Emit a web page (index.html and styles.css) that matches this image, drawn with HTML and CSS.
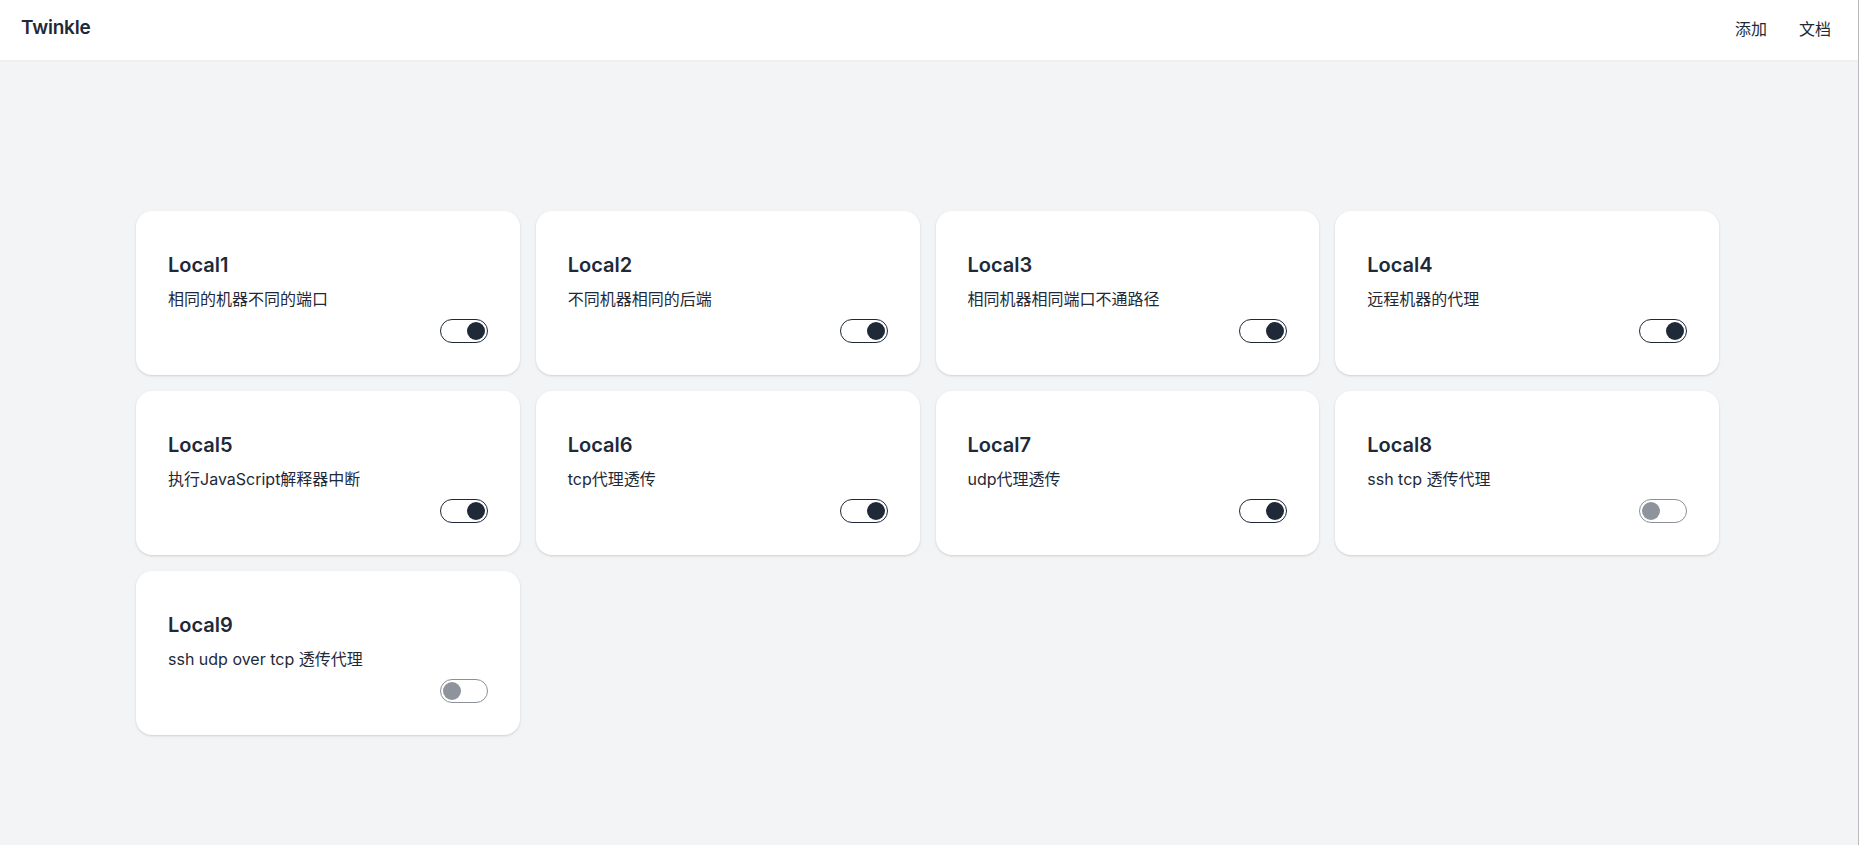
FILE: index.html
```html
<!DOCTYPE html>
<html lang="zh-CN">
<head>
<meta charset="utf-8">
<title>Twinkle</title>
<link rel="stylesheet" href="styles.css">
</head>
<body>
<div class="app">
  <header class="navbar">
    <div class="brand">Twinkle</div>
    <nav class="nav">
      <a class="nav-link">添加</a>
      <a class="nav-link">文档</a>
    </nav>
  </header>
  <main class="main">
    <div class="grid">
      <div class="card"><h2 class="card-title">Local1</h2><p class="card-desc">相同的机器不同的端口</p><div class="card-actions"><span class="toggle on"><span class="knob"></span></span></div></div>
      <div class="card"><h2 class="card-title">Local2</h2><p class="card-desc">不同机器相同的后端</p><div class="card-actions"><span class="toggle on"><span class="knob"></span></span></div></div>
      <div class="card"><h2 class="card-title">Local3</h2><p class="card-desc">相同机器相同端口不通路径</p><div class="card-actions"><span class="toggle on"><span class="knob"></span></span></div></div>
      <div class="card"><h2 class="card-title">Local4</h2><p class="card-desc">远程机器的代理</p><div class="card-actions"><span class="toggle on"><span class="knob"></span></span></div></div>
      <div class="card"><h2 class="card-title">Local5</h2><p class="card-desc">执行JavaScript解释器中断</p><div class="card-actions"><span class="toggle on"><span class="knob"></span></span></div></div>
      <div class="card"><h2 class="card-title">Local6</h2><p class="card-desc">tcp代理透传</p><div class="card-actions"><span class="toggle on"><span class="knob"></span></span></div></div>
      <div class="card"><h2 class="card-title">Local7</h2><p class="card-desc">udp代理透传</p><div class="card-actions"><span class="toggle on"><span class="knob"></span></span></div></div>
      <div class="card"><h2 class="card-title">Local8</h2><p class="card-desc">ssh tcp 透传代理</p><div class="card-actions"><span class="toggle off"><span class="knob"></span></span></div></div>
      <div class="card"><h2 class="card-title">Local9</h2><p class="card-desc">ssh udp over tcp 透传代理</p><div class="card-actions"><span class="toggle off"><span class="knob"></span></span></div></div>
    </div>
  </main>
</div>
</body>
</html>
```

FILE: styles.css
```css
html, body {
  margin: 0;
  padding: 0;
  height: 100%;
  background: #ffffff;
}
body {
  font-family: Inter, "Noto Sans CJK SC", sans-serif;
  color: #1f2937;
  overflow: hidden;
}
.app {
  width: 1858px;
  height: 845px;
  background: #f3f4f6;
  border-right: 1px solid #b9bbbf;
  display: flex;
  flex-direction: column;
}
.navbar {
  height: 60px;
  flex: none;
  background: #ffffff;
  box-shadow: 0 1px 2px rgba(0, 0, 0, 0.04);
  display: flex;
  align-items: center;
  justify-content: space-between;
  padding: 0 27px 5px 21px;
  box-sizing: border-box;
}
.brand {
  font-size: 19px;
  font-weight: 600;
  letter-spacing: -0.2px;
}
.nav {
  display: flex;
  gap: 32px;
}
.nav-link {
  font-size: 16px;
  font-family: "Noto Sans CJK SC", sans-serif;
  color: #1f2937;
}
.main {
  padding: 151px 0 0 136px;
}
.grid {
  width: 1583px;
  display: grid;
  grid-template-columns: repeat(4, 1fr);
  gap: 16px;
}
.card {
  background: #ffffff;
  border-radius: 16px;
  box-shadow: 0 1px 3px rgba(0, 0, 0, 0.1), 0 1px 2px rgba(0, 0, 0, 0.06);
  height: 164px;
  box-sizing: border-box;
  padding: 40px 32px 32px 32px;
  display: flex;
  flex-direction: column;
}
.card-title {
  margin: 0;
  font-size: 20px;
  line-height: 28px;
  font-weight: 600;
}
.card-desc {
  margin: 8px 0 0 0;
  font-size: 16px;
  line-height: 24px;
}
.card-actions {
  margin-top: 8px;
  display: flex;
  justify-content: flex-end;
}
.toggle {
  width: 48px;
  height: 24px;
  box-sizing: border-box;
  border-radius: 12px;
  border: 1.5px solid #1f2937;
  display: flex;
  align-items: center;
  padding: 0 2px;
}
.toggle.on {
  justify-content: flex-end;
}
.toggle.off {
  border-color: #8c9099;
  justify-content: flex-start;
}
.knob {
  width: 18px;
  height: 18px;
  border-radius: 50%;
  background: #1f2937;
}
.toggle.off .knob {
  background: #8f949c;
}
```
